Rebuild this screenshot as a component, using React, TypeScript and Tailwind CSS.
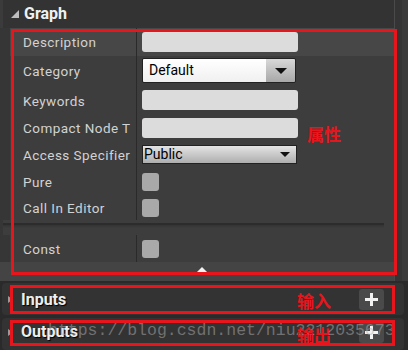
import React from "react";

const font = { fontFamily: "Roboto, 'Noto Sans', 'Liberation Sans', sans-serif" };
const cjk = { fontFamily: "'Noto Sans CJK SC', 'Noto Sans', sans-serif" };

function Row({ label, h, highlight, children }: { label: string; h: string; highlight?: boolean; children?: React.ReactNode }) {
  return (
    <div className={`flex ${h} ${highlight ? "bg-[#474747]" : "bg-[#3d3d3d]"}`}>
      <div className="w-[10px] bg-[#363636]" />
      <div className="w-[126px] flex items-center pl-[13px] pt-[1px] text-[13.5px] tracking-[0.45px] text-[#d2d2d2] whitespace-nowrap overflow-hidden">
        {label}
      </div>
      <div className="w-px bg-[#2a2a2a]" />
      <div className="flex-1 flex items-center pl-[5px]">{children}</div>
    </div>
  );
}

function TextField() {
  return <div className="w-[156px] h-[20px] rounded-[3px] bg-[#dcdcdc]" />;
}

function Check() {
  return <div className="w-[17px] h-[18px] rounded-[3px] bg-[#a9a9a9]" />;
}

function Arrow({ size = 6 }: { size?: number }) {
  return (
    <svg width={size * 2} height={size} viewBox="0 0 12 6">
      <polygon points="0,0 12,0 6,6" fill="#111" />
    </svg>
  );
}

function PlusBtn() {
  return (
    <div className="w-[25px] h-[21px] rounded-[3px] bg-[#4a4a4a] flex items-center justify-center">
      <svg width="13" height="13" viewBox="0 0 13 13">
        <rect x="5" y="0" width="3" height="13" fill="#f2f2f2" />
        <rect x="0" y="5" width="13" height="3" fill="#f2f2f2" />
      </svg>
    </div>
  );
}

export default function App() {
  return (
    <div className="relative w-[408px] h-[350px] overflow-hidden bg-[#2a2a2a]" style={font}>
      {/* Graph section */}
      <div className="flex h-[281px]">
        <div className="w-[394px] flex flex-col">
          <div className="h-[28px] bg-[#333333] flex items-center pl-[8px] gap-[5px] border-l-[3px] border-[#3b3b3b]">
            <svg width="8" height="8" viewBox="0 0 8 8">
              <polygon points="8,0 8,8 0,8" fill="#bdbdbd" />
            </svg>
            <span className="text-[16px] font-bold text-[#f0f0f0]">Graph</span>
          </div>
          <Row label="Description" h="h-[28px]" highlight>
            <TextField />
          </Row>
          <Row label="Category" h="h-[30px]">
            <div className="w-[154px] h-[25px] rounded-[2px] border border-[#222] flex overflow-hidden">
              <div className="flex-1 bg-gradient-to-b from-[#ffffff] to-[#f0f0f0] flex items-center pl-[6px] text-[14px] text-black">
                Default
              </div>
              <div className="w-[29px] bg-gradient-to-b from-[#d8d8d8] to-[#a8a8a8] flex items-center justify-center">
                <Arrow />
              </div>
            </div>
          </Row>
          <Row label="Keywords" h="h-[29px]">
            <TextField />
          </Row>
          <Row label="Compact Node T" h="h-[27px]">
            <TextField />
          </Row>
          <Row label="Access Specifier" h="h-[27px]">
            <div className="w-[155px] h-[19px] border border-[#222] bg-gradient-to-b from-[#e4e4e4] to-[#aeaeae] flex items-center justify-between pl-[1px] pr-[6px] text-[14px] text-black">
              <span>Public</span>
              <Arrow size={5} />
            </div>
          </Row>
          <Row label="Pure" h="h-[27px]">
            <Check />
          </Row>
          <Row label="Call In Editor" h="h-[25px]">
            <Check />
          </Row>
          <div className="h-[15px] bg-[#3d3d3d] flex">
            <div className="w-[3px] bg-[#363636]" />
            <div className="flex-1 flex flex-col">
              <div className="h-[3px]" />
              <div className="h-[2px] bg-[#2c2c2c] mr-[10px]" />
              <div className="h-[3px] bg-gradient-to-b from-[#333] to-[#3d3d3d] mr-[10px]" />
            </div>
          </div>
          <Row label="Const" h="h-[27px]">
            <Check />
          </Row>
          <div className="h-[19px] bg-[#444444] flex justify-center pt-[5px] pl-[10px]">
            <svg width="12" height="8" viewBox="0 0 12 8">
              <polygon points="0,6 12,6 6,0" fill="#f2f2f2" />
              <rect x="0" y="7" width="12" height="1" fill="#f2f2f2" />
            </svg>
          </div>
        </div>
        <div className="w-[14px] flex border-l border-[#4a4a4a]">
          <div className="w-[7px] bg-[#343434]" />
          <div className="w-[7px] bg-[#3a3a3a]" />
        </div>
      </div>

      {/* Inputs */}
      <div className="mt-[2px] ml-[2px] w-[402px] h-[32px] rounded-[4px] bg-[#333333] flex items-center pl-[6px] pr-[20px]">
        <svg width="5" height="7" viewBox="0 0 5 7" className="mr-[8px]">
          <polygon points="0,0 5,3.5 0,7" fill="#9a9a9a" />
        </svg>
        <span className="text-[16px] font-bold text-[#eeeeee] pt-[1px] [text-shadow:1px_1px_1px_#000]">Inputs</span>
        <div className="flex-1" />
        <PlusBtn />
      </div>

      {/* Outputs */}
      <div className="mt-[3px] ml-[2px] w-[402px] h-[32px] rounded-[4px] bg-[#333333] flex items-start pt-[4px] pl-[6px] pr-[20px]">
        <svg width="5" height="7" viewBox="0 0 5 7" className="mr-[8px] mt-[7px]">
          <polygon points="0,0 5,3.5 0,7" fill="#9a9a9a" />
        </svg>
        <span className="text-[16px] font-bold text-[#eeeeee] leading-[20px] [text-shadow:1px_1px_1px_#000]">Outputs</span>
        <div className="flex-1" />
        <PlusBtn />
      </div>

      {/* Watermark */}
      <div
        className="absolute left-[48px] top-[320px] text-[16.5px] leading-[22px] text-[rgba(175,175,175,0.5)] whitespace-nowrap"
        style={{ fontFamily: "'Liberation Mono', 'DejaVu Sans Mono', monospace" }}
      >
        https://blog.csdn.net/niu2212035673
      </div>

      {/* Annotations */}
      <div className="absolute left-[11px] top-[29px] w-[386px] h-[246px] border-[3px] border-[#e8151c]" />
      <div className="absolute left-[10px] top-[285px] w-[385px] h-[29px] border-[3px] border-[#e8151c]" />
      <div className="absolute left-[10px] top-[320px] w-[385px] h-[26px] border-[3px] border-[#e8151c]" />
      <div className="absolute left-[307px] top-[122px] text-[17px] font-bold text-[#e8151c] leading-[24px]" style={cjk}>
        属性
      </div>
      <div className="absolute left-[297px] top-[289px] text-[17px] font-bold text-[#e8151c] leading-[24px]" style={cjk}>
        输入
      </div>
      <div className="absolute left-[297px] top-[323px] text-[17px] font-bold text-[#e8151c] leading-[24px]" style={cjk}>
        输出
      </div>
    </div>
  );
}
